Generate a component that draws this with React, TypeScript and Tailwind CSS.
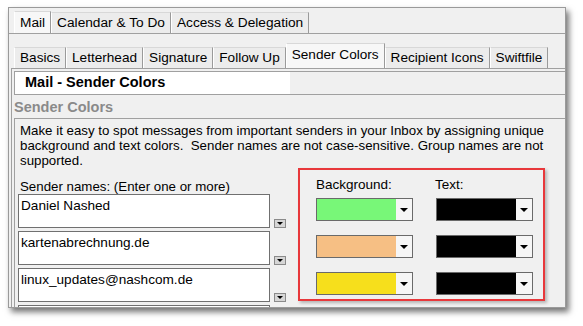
import React from "react";

const font = { fontFamily: '"Liberation Sans", Arial, sans-serif' };

function Tab({ label, active, tall }: { label: string; active?: boolean; tall?: boolean }) {
  return (
    <div
      className={[
        "flex items-center border-l border-t border-r border-l-white border-t-[#d8d8d8] border-r-[#9a9a9a] px-[5px] leading-none text-black",
        active ? "bg-[#f7f7f7]" : "bg-[#ececec]",
        tall ? "h-[25px] pb-[2px]" : active ? "h-[22px]" : "h-[21px]",
      ].join(" ")}
    >
      {label}
    </div>
  );
}

function TinyDrop() {
  return (
    <div className="ml-[4px] flex h-[9px] w-[12px] items-center justify-center self-end border border-[#8a8a8a] bg-[#d6d6d6]">
      <div className="h-0 w-0 border-x-[3px] border-t-[3px] border-x-transparent border-t-black" />
    </div>
  );
}

function NameField({ value }: { value: string }) {
  return (
    <div className="flex">
      <div className="h-[34px] w-[252px] border border-[#707070] bg-white px-[2px] pt-[3px] text-[13.6px] leading-[16px] text-black">
        {value}
      </div>
      <TinyDrop />
    </div>
  );
}

function ColorCombo({ color }: { color: string }) {
  return (
    <div className="flex h-[23px] w-[97px] border border-[#6a6a6a]">
      <div className="flex-1" style={{ backgroundColor: color }} />
      <div className="flex w-[16px] items-center justify-center bg-[#f6f6f6]">
        <div className="h-0 w-0 border-x-[4px] border-t-[4px] border-x-transparent border-t-black" />
      </div>
    </div>
  );
}

const rows = [
  { bg: "#78f778", text: "#000000" },
  { bg: "#f6bf84", text: "#000000" },
  { bg: "#f6df1c", text: "#000000" },
];

export default function App() {
  return (
    <div className="h-[326px] w-[583px] overflow-hidden bg-white pl-[8px] pt-[7px]" style={font}>
      <div className="flex h-[301px] w-[558px] flex-col overflow-hidden border border-[#9a9a9a] bg-[#f0f0f0] shadow-[3px_4px_6px_rgba(0,0,0,0.55)]">
        {/* top tabs */}
        <div className="mt-[4px] flex h-[22px] items-end border-b border-[#a0a0a0] pl-[5px] text-[13.7px]">
          <Tab label="Mail" active />
          <Tab label="Calendar & To Do" />
          <Tab label="Access & Delegation" />
        </div>

        {/* sub tabs */}
        <div className="mt-[9px] flex h-[25px] items-end pl-[5px] text-[13.6px]">
          <Tab label="Basics" />
          <Tab label="Letterhead" />
          <Tab label="Signature" />
          <Tab label="Follow Up" />
          <Tab label="Sender Colors" active tall />
          <Tab label="Recipient Icons" />
          <Tab label="Swiftfile" />
        </div>

        {/* panel */}
        <div className="ml-[2px] flex flex-1 flex-col border-l border-t border-[#a0a0a0] pl-[2px] pt-[2px]">
          <div className="flex h-[24px] border-y border-l border-[#a0a0a0]">
            <div className="flex w-[275px] items-center bg-white pl-[10px] text-[14.5px] font-bold text-black">
              Mail - Sender Colors
            </div>
            <div className="flex-1" />
          </div>

          <div className="mt-[3px] text-[14.5px] font-bold leading-[19px] text-[#8a8a8a]">Sender Colors</div>

          <div className="mt-[1px] flex flex-1 flex-col border-l border-t border-[#a0a0a0]">
            <p className="pl-[5px] pt-[4px] text-[13.3px] leading-[15px] text-black">
              Make it easy to spot messages from important senders in your Inbox by assigning unique
              <br />
              background and text colors.&nbsp; Sender names are not case-sensitive. Group names are not
              <br />
              supported.
            </p>

            <div className="flex">
              <div className="w-[280px] pl-[3px] pt-[11px]">
                <div className="pl-[2px] text-[13.3px] leading-[15px] text-black">Sender names: (Enter one or more)</div>
                <div className="flex flex-col gap-[3px]">
                  <NameField value="Daniel Nashed" />
                  <NameField value="kartenabrechnung.de" />
                  <NameField value="linux_updates@nashcom.de" />
                  <NameField value="" />
                </div>
              </div>

              <div className="ml-[3px] h-[133px] w-[247px] border-2 border-[#e8383b] pl-[16px] pt-[7px] shadow-[2px_2px_3px_rgba(0,0,0,0.25)]">
                <div className="flex text-[13.5px] leading-[15px] text-black">
                  <div className="w-[119px]">Background:</div>
                  <div>Text:</div>
                </div>
                <div className="mt-[6px] flex flex-col gap-[14px]">
                  {rows.map((r, i) => (
                    <div key={i} className="flex gap-[23px]">
                      <ColorCombo color={r.bg} />
                      <ColorCombo color={r.text} />
                    </div>
                  ))}
                </div>
              </div>
            </div>
          </div>
        </div>
      </div>
    </div>
  );
}
